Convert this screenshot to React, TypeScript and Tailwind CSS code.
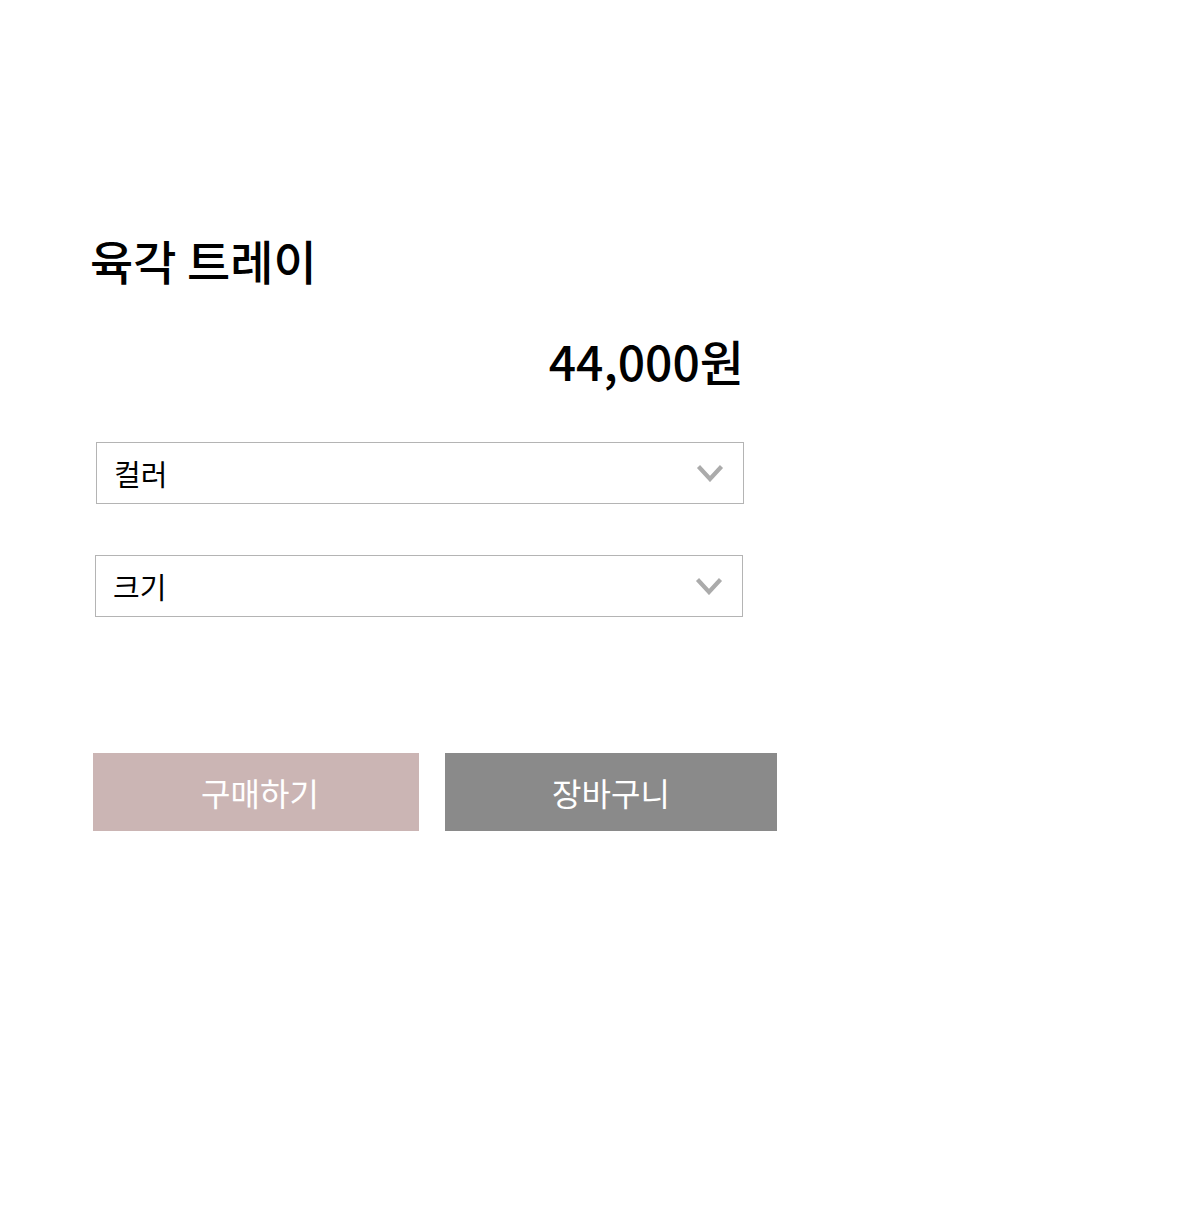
import React from 'react';

const font = { fontFamily: '"Noto Sans CJK KR", "Noto Sans", sans-serif' };

const Chevron: React.FC = () => (
  <svg width="28" height="18" viewBox="0 0 28 18" fill="none" className="shrink-0">
    <path d="M2.5 2.5l11.5 12.5L25.5 2.5" stroke="#ababab" strokeWidth="4.2" strokeLinejoin="miter" strokeMiterlimit="2" />
  </svg>
);

interface OptionSelectProps {
  label: string;
  className?: string;
}

const OptionSelect: React.FC<OptionSelectProps> = ({ label, className }) => (
  <div
    className={`flex h-[62px] w-[648px] items-center justify-between border border-[#b4b4b4] bg-white pl-[17px] pr-[19px] ${className ?? ''}`}
  >
    <span className="pt-[1px] text-[29px] leading-none text-black">{label}</span>
    <Chevron />
  </div>
);

export default function App() {
  return (
    <div className="min-h-[1212px] w-full bg-white" style={font}>
      <div className="flex w-[831px] flex-col pl-[90px] pt-[227px]">
        <h1 className="text-[47px] font-medium leading-[66px] text-black">육각 트레이</h1>

        <div className="mt-[38px] flex w-[654px] justify-end">
          <span className="text-[48px] font-medium leading-[58px] text-black">44,000원</span>
        </div>

        <div className="mt-[53px] flex flex-col gap-[51px]">
          <OptionSelect label="컬러" className="ml-[6px]" />
          <OptionSelect label="크기" className="ml-[5px]" />
        </div>

        <div className="mt-[136px] ml-[3px] flex gap-[26px]">
          <button className="flex h-[78px] w-[326px] shrink-0 items-center justify-center bg-[#cbb5b4] pl-[8px] text-[32px] text-white">
            구매하기
          </button>
          <button className="flex h-[78px] w-[332px] shrink-0 items-center justify-center bg-[#8a8a8a] text-[32px] text-white">
            장바구니
          </button>
        </div>
      </div>
    </div>
  );
}
